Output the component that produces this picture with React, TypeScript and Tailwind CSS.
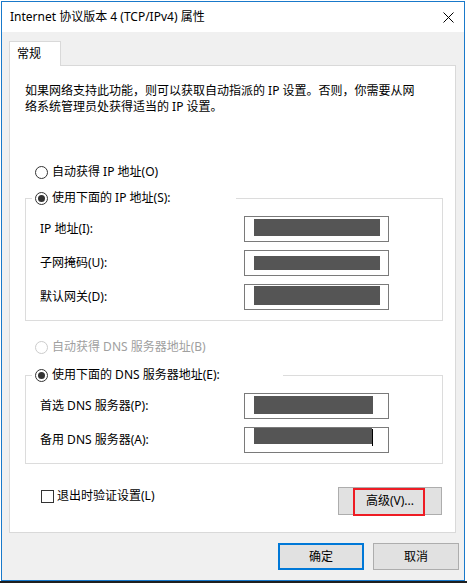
import type { ReactNode } from 'react';

function Radio({ checked, disabled }: { checked?: boolean; disabled?: boolean }) {
  return (
    <span
      className={`flex h-[13px] w-[13px] shrink-0 items-center justify-center rounded-full border bg-white ${
        disabled ? 'border-[#cccccc]' : 'border-[#333333]'
      }`}
    >
      {checked && <span className="h-[7px] w-[7px] rounded-full bg-[#333333]" />}
    </span>
  );
}

function Field({
  label,
  pad,
  h,
  w,
  cursor,
}: {
  label: string;
  pad: string;
  h: string;
  w: string;
  cursor?: boolean;
}) {
  return (
    <div className="flex h-[26px] items-center">
      <span className="w-[204px] shrink-0">{label}</span>
      <div className={`flex h-[26px] w-[145px] items-start border border-[#7a7a7a] bg-white pl-[9px] ${pad}`}>
        <div className={`bg-[#555555] ${h} ${w}`} />
        {cursor && <div className="mt-[1px] h-[17px] w-px bg-black" />}
      </div>
    </div>
  );
}

function Group({ legend, width, children }: { legend: ReactNode; width: string; children: ReactNode }) {
  return (
    <fieldset className="ml-[15px] mr-[12px] border border-[#dcdcdc] px-0 pb-[10px]">
      <legend className={`ml-[6px] flex h-[16px] items-center gap-[4px] pl-[3px] ${width}`}>{legend}</legend>
      <div className="mt-[10px] flex flex-col gap-[8px] pl-[14px]">{children}</div>
    </fieldset>
  );
}

export default function App() {
  return (
    <div className="h-[583px] w-[467px] bg-white font-['Noto_Sans','Noto_Sans_CJK_SC',sans-serif] text-[12px] leading-[16px] text-black">
      {/* Window */}
      <div className="ml-px mt-px flex h-[580px] w-[464px] flex-col border border-[#1979ca] bg-[#f0f0f0]">
        {/* Title bar */}
        <div className="flex h-[30px] shrink-0 items-center justify-between bg-white pl-[8px] pr-[8px]">
          <span>Internet 协议版本 4 (TCP/IPv4) 属性</span>
          <svg width="11" height="11" viewBox="0 0 11 11" className="mr-[2px]">
            <path d="M0.5 0.5 L10.5 10.5 M10.5 0.5 L0.5 10.5" stroke="#000" strokeWidth="1" fill="none" />
          </svg>
        </div>

        {/* Body */}
        <div className="flex flex-col pl-[7px] pr-[8px] pt-[9px]">
          {/* Tab */}
          <div className="relative z-10 -mb-px flex h-[25px] w-[52px] items-start border border-b-0 border-[#d9d9d9] bg-white pl-[7px] pt-[4px]">
            常规
          </div>

          {/* Panel */}
          <div className="flex h-[468px] flex-col border border-[#d9d9d9] bg-white">
            <p className="ml-[15px] mt-[17px]">
              如果网络支持此功能，则可以获取自动指派的 IP 设置。否则，你需要从网
              <br />
              络系统管理员处获得适当的 IP 设置。
            </p>

            <div className="ml-[25px] mt-[49px] flex h-[16px] items-center gap-[4px]">
              <Radio />
              <span>自动获得 IP 地址(O)</span>
            </div>

            <div className="mt-[10px]">
              <Group
                width="w-[204px]"
                legend={
                  <>
                    <Radio checked />
                    <span>使用下面的 IP 地址(S):</span>
                  </>
                }
              >
                <Field label="IP 地址(I):" pad="pt-[2px]" h="h-[17px]" w="w-[126px]" />
                <Field label="子网掩码(U):" pad="pt-[5px]" h="h-[14px]" w="w-[126px]" />
                <Field label="默认网关(D):" pad="pt-[1px]" h="h-[19px]" w="w-[126px]" />
              </Group>
            </div>

            <div className="ml-[25px] mt-[18px] flex h-[16px] items-center gap-[4px] text-[#a0a0a0]">
              <Radio disabled />
              <span>自动获得 DNS 服务器地址(B)</span>
            </div>

            <div className="mt-[12px]">
              <Group
                width="w-[251px]"
                legend={
                  <>
                    <Radio checked />
                    <span>使用下面的 DNS 服务器地址(E):</span>
                  </>
                }
              >
                <Field label="首选 DNS 服务器(P):" pad="pt-[2px]" h="h-[18px]" w="w-[119px]" />
                <Field label="备用 DNS 服务器(A):" pad="pt-0" h="h-[16px]" w="w-[118px]" cursor />
              </Group>
            </div>

            <div className="ml-[31px] mr-[13px] mt-[23px] flex items-start justify-between">
              <label className="mt-[1px] flex h-[16px] items-center gap-[3px]">
                <span className="h-[13px] w-[13px] border border-[#333333] bg-white" />
                <span>退出时验证设置(L)</span>
              </label>
              <button className="relative flex h-[28px] w-[104px] items-center justify-center border border-[#adadad] bg-[#e1e1e1]">
                高级(V)...
                <span className="absolute left-[14px] top-0 h-[28px] w-[72px] border-2 border-[#ee1c24]" />
              </button>
            </div>
          </div>
        </div>

        {/* Dialog buttons */}
        <div className="mt-[10px] flex justify-end gap-[9px] pr-[5px]">
          <button className="flex h-[27px] w-[86px] items-center justify-center border-2 border-[#0078d7] bg-[#e1e1e1]">
            确定
          </button>
          <button className="flex h-[27px] w-[86px] items-center justify-center border border-[#adadad] bg-[#e1e1e1]">
            取消
          </button>
        </div>
      </div>
      <div className="h-[2px] w-full bg-[#1f1f1f]" />
    </div>
  );
}
